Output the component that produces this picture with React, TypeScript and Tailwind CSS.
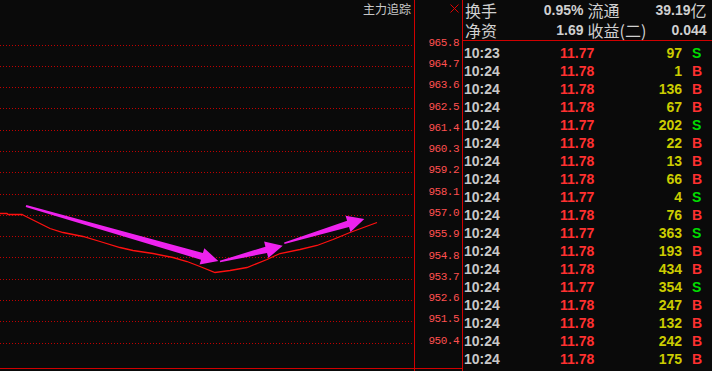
import React from "react";

interface Tick {
    time: string;
    price: string;
    vol: number;
    side: "B" | "S";
}

const ticks: Tick[] = [
    { time: "10:23", price: "11.77", vol: 97, side: "S" },
    { time: "10:24", price: "11.78", vol: 1, side: "B" },
    { time: "10:24", price: "11.78", vol: 136, side: "B" },
    { time: "10:24", price: "11.78", vol: 67, side: "B" },
    { time: "10:24", price: "11.77", vol: 202, side: "S" },
    { time: "10:24", price: "11.78", vol: 22, side: "B" },
    { time: "10:24", price: "11.78", vol: 13, side: "B" },
    { time: "10:24", price: "11.78", vol: 66, side: "B" },
    { time: "10:24", price: "11.77", vol: 4, side: "S" },
    { time: "10:24", price: "11.78", vol: 76, side: "B" },
    { time: "10:24", price: "11.77", vol: 363, side: "S" },
    { time: "10:24", price: "11.78", vol: 193, side: "B" },
    { time: "10:24", price: "11.78", vol: 434, side: "B" },
    { time: "10:24", price: "11.77", vol: 354, side: "S" },
    { time: "10:24", price: "11.78", vol: 247, side: "B" },
    { time: "10:24", price: "11.78", vol: 132, side: "B" },
    { time: "10:24", price: "11.78", vol: 242, side: "B" },
    { time: "10:24", price: "11.78", vol: 175, side: "B" },
];

const axisLabels = [
    "965.8", "964.7", "963.6", "962.5", "961.4", "960.3", "959.2", "958.1",
    "957.0", "955.9", "954.8", "953.7", "952.6", "951.5", "950.4",
];

const gridYs = axisLabels.map((_, i) => Math.floor(45 + i * 21.29) + 0.5);

// price line, in page pixels
const pricePts = [
    [0, 213], [7, 213], [8, 214], [22, 214], [24, 215], [50, 228], [63, 232],
    [83, 236], [100, 241], [120, 247], [133, 250], [153, 253], [173, 257],
    [187, 261], [200, 266], [215, 272], [230, 270], [247, 267], [267, 259],
    [280, 253], [300, 249], [317, 245], [333, 239], [350, 232], [377, 222],
];

// tapered block arrow: thin tail, wider shaft near head, triangle head
function arrowPoints(x1: number, y1: number, x2: number, y2: number, tw = 2, sw = 7, hw = 17, hl = 17) {
    const dx = x2 - x1;
    const dy = y2 - y1;
    const len = Math.hypot(dx, dy);
    const ux = dx / len;
    const uy = dy / len;
    const nx = -uy;
    const ny = ux;
    const bx = x2 - ux * hl;
    const by = y2 - uy * hl;
    const pts = [
        [x1 + nx * tw / 2, y1 + ny * tw / 2],
        [bx + nx * sw / 2, by + ny * sw / 2],
        [bx + nx * hw / 2, by + ny * hw / 2],
        [x2, y2],
        [bx - nx * hw / 2, by - ny * hw / 2],
        [bx - nx * sw / 2, by - ny * sw / 2],
        [x1 - nx * tw / 2, y1 - ny * tw / 2],
    ];
    return pts.map(p => `${p[0].toFixed(1)},${p[1].toFixed(1)}`).join(" ");
}

const num = { fontFamily: '"Liberation Sans", Arial, sans-serif' };
const cjk = { fontFamily: '"Noto Sans CJK SC", "Liberation Sans", sans-serif' };
const mono = { fontFamily: '"Liberation Mono", monospace' };

export default function App() {
    return (
        <div className="flex h-[371px] w-[712px] overflow-hidden bg-[#0a0a0a]">
            {/* chart */}
            <div className="flex w-[414px] shrink-0 flex-col">
                <div className="flex h-[17px] items-center justify-end pr-[3px] text-[12px] leading-[17px] text-[#c8c8c8]" style={cjk}>
                    主力追踪
                </div>
                <svg width={414} height={351} viewBox="0 17 414 351" className="block">
                    {gridYs.map(y => (
                        <line key={y} x1={0} x2={414} y1={y} y2={y} stroke="#c00000" strokeWidth={1} strokeDasharray="1 2" shapeRendering="crispEdges" />
                    ))}
                    <polyline
                        points={pricePts.map(p => `${p[0]},${p[1] + 0.5}`).join(" ")}
                        fill="none"
                        stroke="#ff1010"
                        strokeWidth={1.3}
                    />
                    <polygon points={arrowPoints(26, 206, 218.3, 261)} fill="#ee22ee" />
                    <polygon points={arrowPoints(220, 261.5, 282.7, 245.7, 1.5, 6.5)} fill="#ee22ee" />
                    <polygon points={arrowPoints(284.3, 243.3, 364.3, 219, 1.5, 6.5)} fill="#ee22ee" />
                </svg>
                <div className="h-px bg-[#d00000]" />
            </div>

            {/* price axis */}
            <div className="flex w-[48px] shrink-0 flex-col border-l border-[#d00000]">
                <div className="flex h-[17px] justify-end pt-[4px] pr-[3px]">
                    <svg width={9} height={9} viewBox="0 0 9 9">
                        <path d="M0.5 0.5 L8.5 8.5 M8.5 0.5 L0.5 8.5" stroke="#e00000" strokeWidth={1} />
                    </svg>
                </div>
                <div className="flex h-[351px] flex-col pt-[15.6px]">
                    {axisLabels.map(l => (
                        <div key={l} className="flex h-[21.29px] items-center justify-end pr-[3px] text-[11px] leading-none tracking-[-0.5px] text-[#ff5050]" style={mono}>
                            {l}
                        </div>
                    ))}
                </div>
                <div className="h-px bg-[#d00000]" />
            </div>

            {/* tick list */}
            <div className="flex min-w-0 flex-1 flex-col border-l border-[#d00000]">
                <div className="flex h-[41px] flex-col border-b border-[#d00000] text-[#d0d0d0]">
                    <div className="flex h-[20px] items-center pl-[2px] pr-[5.5px] leading-[20px]">
                        <div className="flex w-[118.5px] items-center justify-between">
                            <span className="text-[16px]" style={cjk}>换手</span>
                            <span className="text-[14px] font-bold" style={num}>0.95%</span>
                        </div>
                        <div className="ml-[4px] flex flex-1 items-center justify-between">
                            <span className="text-[16px]" style={cjk}>流通</span>
                            <span className="flex items-center">
                                <span className="text-[14px] font-bold" style={num}>39.19</span>
                                <span className="text-[16px]" style={cjk}>亿</span>
                            </span>
                        </div>
                    </div>
                    <div className="flex h-[20px] items-center pl-[2px] pr-[5.5px] leading-[20px]">
                        <div className="flex w-[118.5px] items-center justify-between">
                            <span className="text-[16px]" style={cjk}>净资</span>
                            <span className="text-[14px] font-bold" style={num}>1.69</span>
                        </div>
                        <div className="ml-[4px] flex flex-1 items-center justify-between">
                            <span className="text-[16px]" style={cjk}>收益(二)</span>
                            <span className="text-[14px] font-bold" style={num}>0.044</span>
                        </div>
                    </div>
                </div>
                <div className="flex flex-col pt-[3px] text-[14px] font-bold leading-[18px]" style={num}>
                    {ticks.map((t, i) => (
                        <div key={i} className="flex h-[18px] items-center pl-[1px]">
                            <span className="w-[96px] text-[#c8c8c8]">{t.time}</span>
                            <span className="w-[50px] text-[#ff3030]">{t.price}</span>
                            <span className="w-[72px] text-right text-[#cccc00]">{t.vol}</span>
                            <span className={t.side === "S" ? "pl-[10px] text-[#00dd00]" : "pl-[10px] text-[#ff3030]"}>
                                {t.side}
                            </span>
                        </div>
                    ))}
                </div>
            </div>
        </div>
    );
}
